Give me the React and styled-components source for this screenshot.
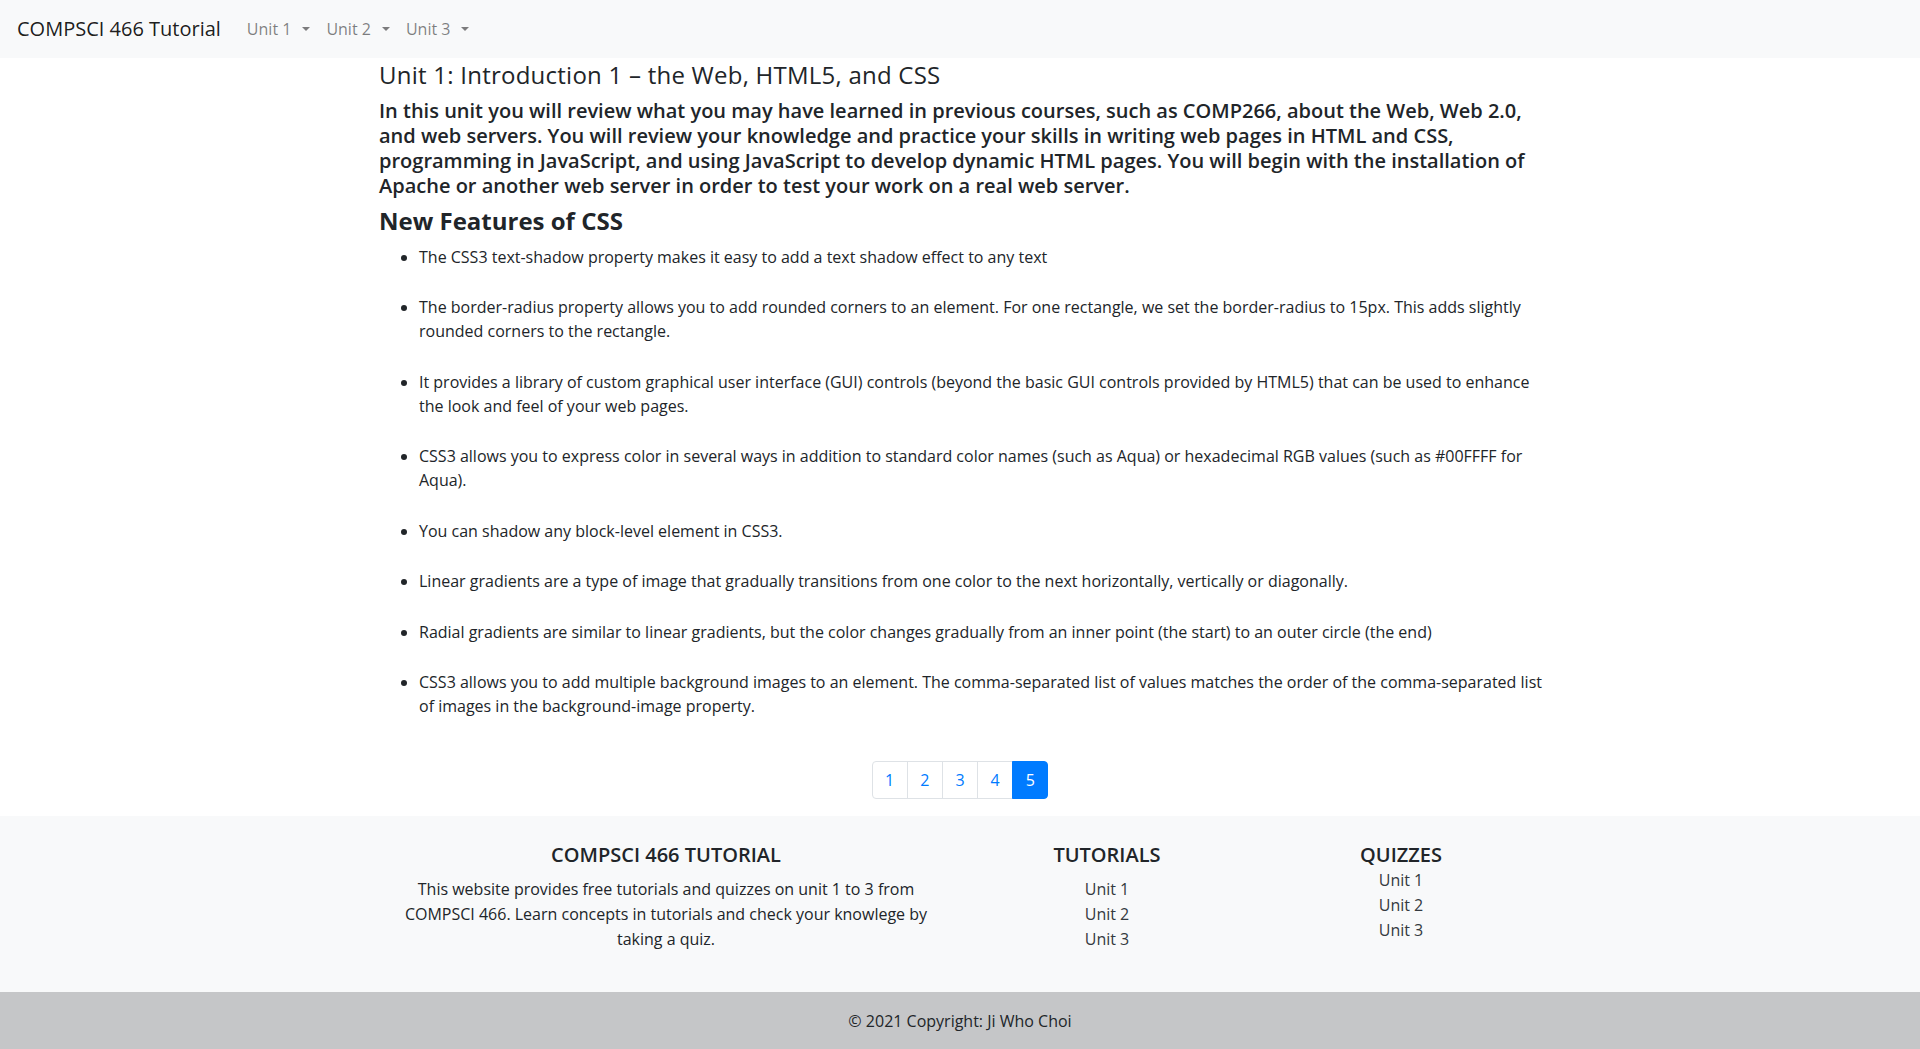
import React from "react";
import styled, { createGlobalStyle, css } from "styled-components";

const GlobalStyle = createGlobalStyle`
  *, *::before, *::after {
    box-sizing: border-box;
  }
  body {
    margin: 0;
    font-family: "Open Sans", "Noto Sans", sans-serif;
    font-size: 16px;
    line-height: 1.5;
    color: #212529;
    background: #fff;
  }
`;

const features = [
  "The CSS3 text-shadow property makes it easy to add a text shadow effect to any text",
  "The border-radius property allows you to add rounded corners to an element. For one rectangle, we set the border-radius to 15px. This adds slightly rounded corners to the rectangle.",
  "It provides a library of custom graphical user interface (GUI) controls (beyond the basic GUI controls provided by HTML5) that can be used to enhance the look and feel of your web pages.",
  "CSS3 allows you to express color in several ways in addition to standard color names (such as Aqua) or hexadecimal RGB values (such as #00FFFF for Aqua).",
  "You can shadow any block-level element in CSS3.",
  "Linear gradients are a type of image that gradually transitions from one color to the next horizontally, vertically or diagonally.",
  "Radial gradients are similar to linear gradients, but the color changes gradually from an inner point (the start) to an outer circle (the end)",
  "CSS3 allows you to add multiple background images to an element. The comma-separated list of values matches the order of the comma-separated list of images in the background-image property.",
];

function App() {
  return (
    <>
      <GlobalStyle />
      <Navbar>
        <Brand href="#">COMPSCI 466 Tutorial</Brand>
        <NavMenu>
          <NavLink href="#">Unit 1<Caret /></NavLink>
          <NavLink href="#">Unit 2<Caret /></NavLink>
          <NavLink href="#">Unit 3<Caret /></NavLink>
        </NavMenu>
      </Navbar>

      <Main>
        <Title>Unit 1: Introduction 1 – the Web, HTML5, and CSS</Title>
        <Lead>
          In this unit you will review what you may have learned in previous
          courses, such as COMP266, about the Web, Web 2.0, and web servers.
          You will review your knowledge and practice your skills in writing
          web pages in HTML and CSS, programming in JavaScript, and using
          JavaScript to develop dynamic HTML pages. You will begin with the
          installation of Apache or another web server in order to test your
          work on a real web server.
        </Lead>
        <SectionTitle>New Features of CSS</SectionTitle>
        <FeatureList>
          {features.map((f, i) => (
            <li key={i}>{f}</li>
          ))}
        </FeatureList>

        <Pagination>
          {[1, 2, 3, 4, 5].map((n) => (
            <PageLink key={n} href="#" active={n === 5}>
              {n}
            </PageLink>
          ))}
        </Pagination>
      </Main>

      <Footer>
        <FooterGrid>
          <FooterCol>
            <FooterTitle>COMPSCI 466 TUTORIAL</FooterTitle>
            <FooterText>
              This website provides free tutorials and quizzes on unit 1 to 3
              from COMPSCI 466. Learn concepts in tutorials and check your
              knowlege by taking a quiz.
            </FooterText>
          </FooterCol>
          <FooterCol>
            <FooterTitle>TUTORIALS</FooterTitle>
            <LinkList>
              <li><FooterLink href="#">Unit 1</FooterLink></li>
              <li><FooterLink href="#">Unit 2</FooterLink></li>
              <li><FooterLink href="#">Unit 3</FooterLink></li>
            </LinkList>
          </FooterCol>
          <FooterCol>
            <FooterTitle tight>QUIZZES</FooterTitle>
            <LinkList>
              <li><FooterLink href="#">Unit 1</FooterLink></li>
              <li><FooterLink href="#">Unit 2</FooterLink></li>
              <li><FooterLink href="#">Unit 3</FooterLink></li>
            </LinkList>
          </FooterCol>
        </FooterGrid>
        <Copyright>© 2021 Copyright: Ji Who Choi</Copyright>
      </Footer>
    </>
  );
}

export default App;

const Navbar = styled.nav`
  height: 58px;
  display: flex;
  align-items: center;
  padding: 0 16px 0 17px;
  background: #f8f9fa;
`;

const Brand = styled.a`
  font-size: 20px;
  line-height: 30px;
  color: rgba(0, 0, 0, 0.9);
  text-decoration: none;
  margin-right: 18px;
  white-space: nowrap;
`;

const NavMenu = styled.div`
  display: flex;
  align-items: center;
`;

const NavLink = styled.a`
  padding: 8px;
  color: rgba(0, 0, 0, 0.5);
  text-decoration: none;
  white-space: nowrap;
`;

const Caret = styled.span`
  display: inline-block;
  margin-left: 11px;
  vertical-align: 0.255em;
  border-top: 0.3em solid;
  border-right: 0.3em solid transparent;
  border-left: 0.3em solid transparent;
`;

const Main = styled.main`
  max-width: 1162px;
  margin: 0 auto;
  padding-top: 3px;
`;

const Title = styled.h4`
  margin: 0 0 8px;
  font-size: 24px;
  font-weight: 400;
  line-height: 1.2;
  letter-spacing: 0.01em;
`;

const Lead = styled.h5`
  margin: 0 0 9px;
  font-size: 20px;
  font-weight: 600;
  line-height: 25px;
`;

const SectionTitle = styled.h4`
  margin: 0 0 9px;
  font-size: 24px;
  font-weight: 700;
  line-height: 1.2;
`;

const FeatureList = styled.ul`
  margin: 0 -8px 0 0;
  padding: 0 0 16px 40px;

  li {
    line-height: 24px;
    margin-bottom: 26.5px;
  }
`;

const Pagination = styled.nav`
  display: flex;
  justify-content: center;
  margin-bottom: 17px;
`;

const PageLink = styled.a`
  display: block;
  padding: 8px 12.5px;
  margin-left: -1px;
  line-height: 20px;
  color: #007bff;
  text-decoration: none;
  background: #fff;
  border: 1px solid #dee2e6;

  &:first-child {
    margin-left: 0;
    border-radius: 4px 0 0 4px;
  }
  &:last-child {
    border-radius: 0 4px 4px 0;
  }

  ${(p) =>
    p.active &&
    css`
      position: relative;
      z-index: 1;
      color: #fff;
      background: #007bff;
      border-color: #007bff;
    `}
`;

const Footer = styled.footer`
  background: #f8f9fa;
`;

const FooterGrid = styled.div`
  width: 1162px;
  margin: 0 auto;
  padding: 27px 0 40px;
  display: grid;
  grid-template-columns: 574px 308px 280px;
  text-align: center;
`;

const FooterCol = styled.div`
  padding: 0 15px;
`;

const FooterTitle = styled.h5`
  margin: 0 0 ${(p) => (p.tight ? "1.5px" : "10.5px")};
  font-size: 20px;
  font-weight: 600;
  line-height: 24px;
  text-transform: uppercase;
`;

const FooterText = styled.p`
  margin: 0;
  line-height: 25px;
`;

const LinkList = styled.ul`
  list-style: none;
  margin: 0;
  padding: 0;

  li {
    line-height: 25px;
  }
`;

const FooterLink = styled.a`
  color: #343a40;
  text-decoration: none;
`;

const Copyright = styled.div`
  height: 57px;
  display: flex;
  align-items: center;
  justify-content: center;
  background: #c5c6c8;
  color: #212529;
`;
